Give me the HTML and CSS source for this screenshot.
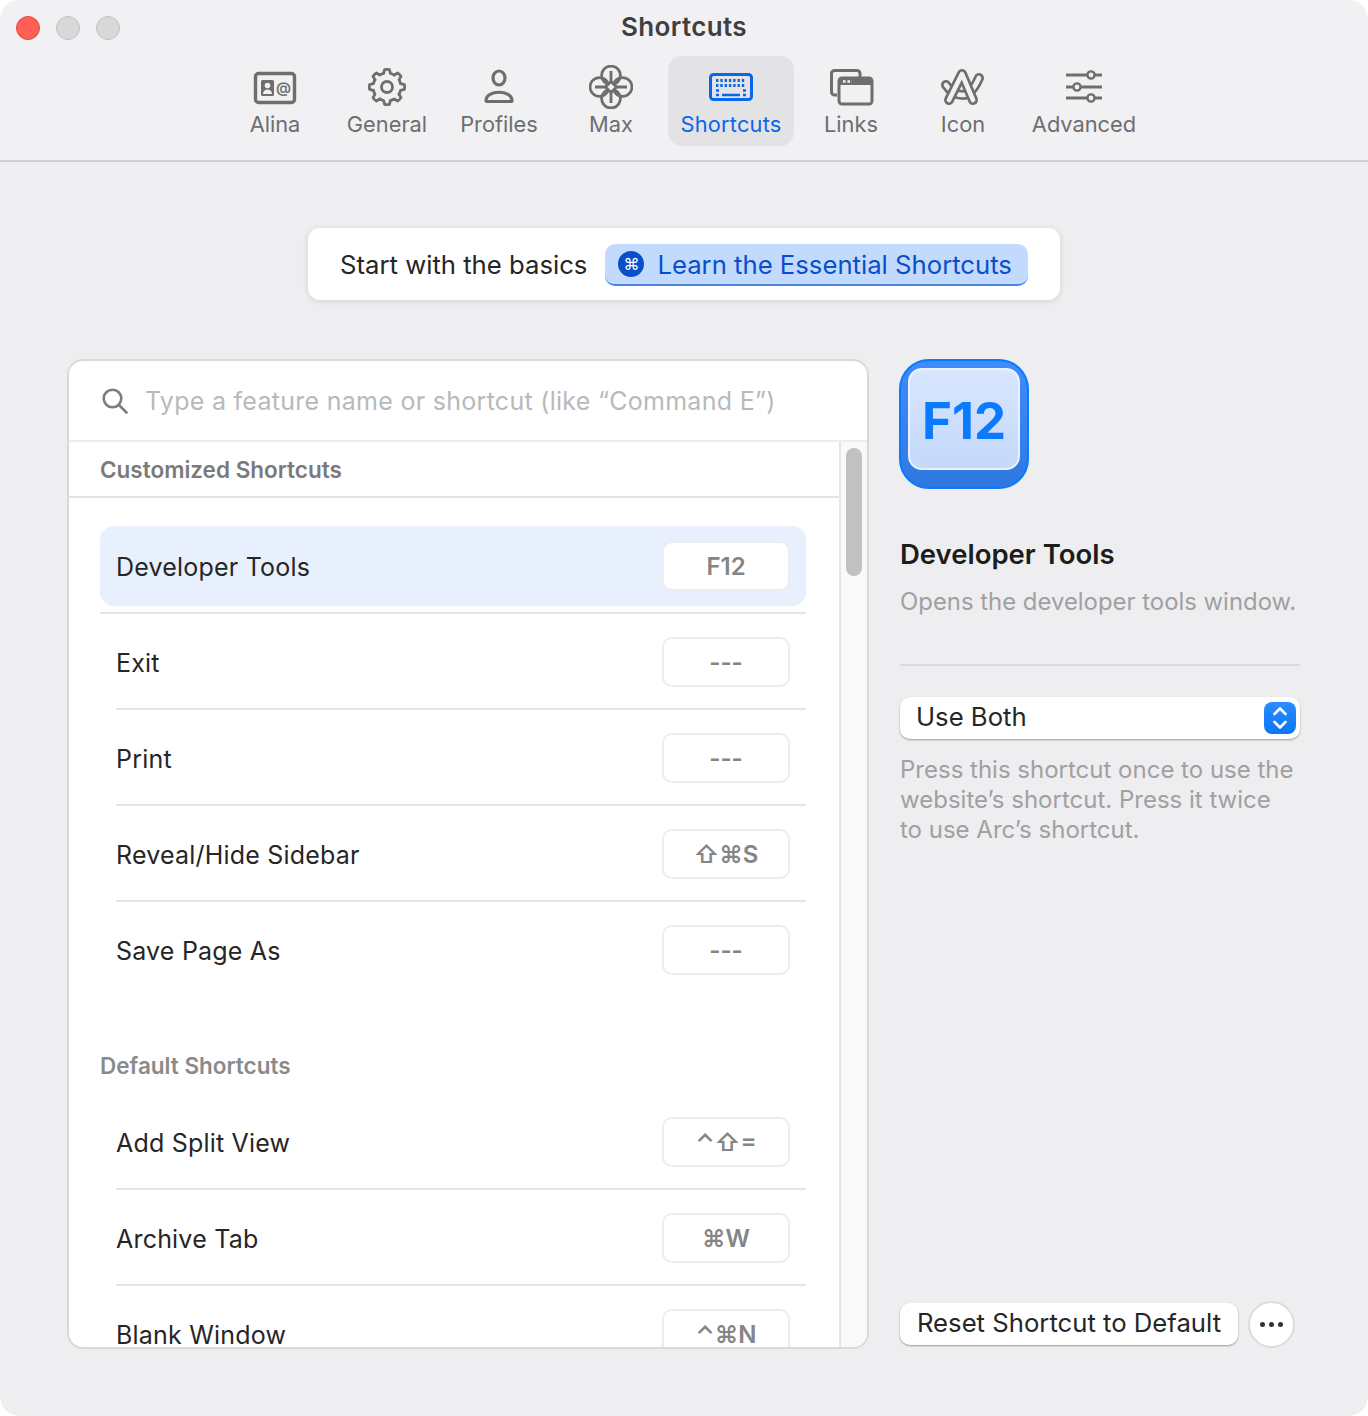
FILE: index.html
```html
<!DOCTYPE html>
<html lang="en">
<head>
  <meta charset="UTF-8" />
  <title>Shortcuts</title>
  <link rel="stylesheet" href="styles.css">
</head>
<body>
  <div class="window">
    <header class="toolbar">
      <div class="lights">
        <span class="light red"></span>
        <span class="light"></span>
        <span class="light"></span>
      </div>
      <div class="title">Shortcuts</div>
      <nav class="tabs">
        <div class="tab">
          <svg width="44" height="36" viewBox="0 0 44 36">
            <rect x="2.5" y="4.5" width="39" height="29" rx="3" fill="none" stroke="currentColor" stroke-width="3.4"/>
            <rect x="8" y="11" width="13" height="16" rx="1.5" fill="currentColor"/>
            <circle cx="14.5" cy="16.5" r="2.8" fill="#f1f1f4"/>
            <path d="M10 25c0-6 9-6 9 0z" fill="#f1f1f4"/>
            <text x="23" y="24" class="at">@</text>
          </svg>
          <span>Alina</span>
        </div>
        <div class="tab">
          <svg width="40" height="40" viewBox="0 0 40 40">
            <defs>
              <path id="tooth" d="M16.6 6.4 17.6 2.6Q20 2 22.4 2.6L23.4 6.4A14 14 0 0 1 27.2 8"/>
            </defs>
            <g fill="none" stroke="currentColor" stroke-width="2.8" stroke-linejoin="round" stroke-linecap="round">
              <use href="#tooth"/>
              <use href="#tooth" transform="rotate(45 20 20)"/>
              <use href="#tooth" transform="rotate(90 20 20)"/>
              <use href="#tooth" transform="rotate(135 20 20)"/>
              <use href="#tooth" transform="rotate(180 20 20)"/>
              <use href="#tooth" transform="rotate(225 20 20)"/>
              <use href="#tooth" transform="rotate(270 20 20)"/>
              <use href="#tooth" transform="rotate(315 20 20)"/>
              <circle cx="20" cy="20" r="5.5"/>
            </g>
          </svg>
          <span>General</span>
        </div>
        <div class="tab">
          <svg width="40" height="40" viewBox="0 0 40 40" fill="none" stroke="currentColor" stroke-width="3.2">
            <ellipse cx="20" cy="11" rx="6" ry="7"/>
            <path d="M7 33.5c0-11 26-11 26 0 0 .6-.4 1-1 1H8c-.6 0-1-.4-1-1z" stroke-linejoin="round"/>
          </svg>
          <span>Profiles</span>
        </div>
        <div class="tab">
          <svg width="44" height="44" viewBox="0 0 44 44" fill="none" stroke="currentColor" stroke-width="2.8" stroke-linejoin="round">
            <path d="M22 16.5 27.5 22 22 27.5 16.5 22z"/>
            <path d="M19.25 19.25A9.3 9.3 0 1 1 24.75 19.25"/>
            <path d="M19.25 24.75A9.3 9.3 0 1 0 24.75 24.75"/>
            <path d="M19.25 19.25A9.3 9.3 0 1 0 19.25 24.75"/>
            <path d="M24.75 19.25A9.3 9.3 0 1 1 24.75 24.75"/>
            <path d="M22 6V16.5M22 27.5V38M6 22H16.5M27.5 22H38"/>
          </svg>
          <span>Max</span>
        </div>
        <div class="tab active">
          <svg width="46" height="32" viewBox="0 0 46 32">
            <rect x="2.5" y="3.5" width="41" height="25" rx="3" fill="none" stroke="currentColor" stroke-width="3"/>
            <path d="M8 9.5H38M8 14.5H38" stroke="currentColor" stroke-width="3" stroke-dasharray="2.4 1.9" fill="none"/>
            <path d="M8 19.5H11M35 19.5H38M8 24H11M14 24H32M35 24H38" stroke="currentColor" stroke-width="2.4" fill="none"/>
          </svg>
          <span>Shortcuts</span>
        </div>
        <div class="tab">
          <svg width="46" height="40" viewBox="0 0 46 40" fill="none" stroke="currentColor" stroke-width="3">
            <path d="M9 28H6.5a3 3 0 0 1-3-3V6.5a3 3 0 0 1 3-3H29a3 3 0 0 1 3 3V10"/>
            <rect x="11" y="11" width="33" height="26" rx="3"/>
            <path d="M11 12.5a2 2 0 0 1 2-2h29a2 2 0 0 1 2 2V18H11z" fill="currentColor" stroke="none"/>
            <path d="M15 14.5H24" stroke="#f1f1f4" stroke-dasharray="2.6 1.8" stroke-width="2.4"/>
          </svg>
          <span>Links</span>
        </div>
        <div class="tab">
          <svg width="46" height="40" viewBox="0 0 46 40" fill="none" stroke-linecap="round" stroke-linejoin="round">
            <path d="M6 18C10 24 16 28 23 28 30 28 35 20 39 11" stroke="currentColor" stroke-width="10"/>
            <path d="M6 18C10 24 16 28 23 28 30 28 35 20 39 11" stroke="#f1f1f4" stroke-width="4.6"/>
            <path d="M9 33 22 7 33 33" stroke="currentColor" stroke-width="10"/>
            <path d="M9 33 22 7 33 33" stroke="#f1f1f4" stroke-width="4.6"/>
          </svg>
          <span>Icon</span>
        </div>
        <div class="tab wide">
          <svg width="40" height="36" viewBox="0 0 40 36" fill="none" stroke="currentColor" stroke-width="2.8">
            <path d="M2 6H23M31 6H38M2 18H9M17 18H38M2 29H23M31 29H38"/>
            <circle cx="27" cy="6" r="3.6" stroke-width="2.4"/>
            <circle cx="13" cy="18" r="3.6" stroke-width="2.4"/>
            <circle cx="27" cy="29" r="3.6" stroke-width="2.4"/>
          </svg>
          <span>Advanced</span>
        </div>
      </nav>
    </header>

    <div class="banner-wrap">
      <div class="banner">
        <span class="banner-text">Start with the basics</span>
        <button class="learn"><span class="cmd-dot">⌘</span>Learn the Essential Shortcuts</button>
      </div>
    </div>

    <main class="main">
      <section class="panel">
        <div class="search">
          <svg width="26" height="26" viewBox="0 0 26 26" fill="none" stroke="#7d7d7d" stroke-width="2.6" stroke-linecap="round">
            <circle cx="10.5" cy="10.5" r="8.8"/>
            <path d="M17 17 24.5 24.5"/>
          </svg>
          <span>Type a feature name or shortcut (like “Command E”)</span>
        </div>
        <div class="panel-body">
          <div class="list">
            <div class="list-head">Customized Shortcuts</div>
            <div class="rows">
              <div class="row selected"><span>Developer Tools</span><span class="key">F12</span></div>
              <div class="row"><span>Exit</span><span class="key">---</span></div>
              <div class="row"><span>Print</span><span class="key">---</span></div>
              <div class="row"><span>Reveal/Hide Sidebar</span><span class="key">⇧⌘S</span></div>
              <div class="row last"><span>Save Page As</span><span class="key">---</span></div>
              <div class="group">Default Shortcuts</div>
              <div class="row"><span>Add Split View</span><span class="key">⌃⇧=</span></div>
              <div class="row"><span>Archive Tab</span><span class="key">⌘W</span></div>
              <div class="row"><span>Blank Window</span><span class="key">⌃⌘N</span></div>
            </div>
          </div>
          <div class="scroll"><div class="thumb"></div></div>
        </div>
      </section>

      <aside class="detail">
        <div class="keycap"><div class="keyface">F12</div></div>
        <h2>Developer Tools</h2>
        <p class="desc">Opens the developer tools window.</p>
        <hr class="rule">
        <div class="select">
          <span>Use Both</span>
          <span class="stepper">
            <svg width="18" height="26" viewBox="0 0 18 26" fill="none" stroke="#fff" stroke-width="2.6" stroke-linecap="round" stroke-linejoin="round">
              <path d="M3.5 9 9 3.5 14.5 9M3.5 17 9 22.5 14.5 17"/>
            </svg>
          </span>
        </div>
        <p class="help">Press this shortcut once to use the website’s shortcut. Press it twice to use Arc’s shortcut.</p>
        <div class="actions">
          <button class="reset">Reset Shortcut to Default</button>
          <button class="more"><i></i><i></i><i></i></button>
        </div>
      </aside>
    </main>
  </div>
</body>
</html>
```
FILE: styles.css
```css
html, body {
  margin: 0;
  background: #fff;
}
body {
  font-family: Inter, "Noto Sans", "DejaVu Sans", sans-serif;
  font-size: 25px;
  color: #262626;
}
.window {
  width: 1368px;
  height: 1416px;
  background: #eeeef0;
  border-radius: 20px;
  overflow: hidden;
  display: flex;
  flex-direction: column;
}

/* toolbar */
.toolbar {
  position: relative;
  height: 160px;
  background: #f1f1f4;
  border-bottom: 2px solid #cfcfd1;
  flex: none;
}
.lights {
  position: absolute;
  left: 16px;
  top: 16px;
  display: flex;
  gap: 16px;
}
.light {
  width: 24px;
  height: 24px;
  border-radius: 50%;
  background: #d8d8da;
  box-sizing: border-box;
  border: 1px solid #bfbfc1;
}
.light.red {
  background: #ff5f57;
  border-color: #e5483f;
}
.title {
  text-align: center;
  font-weight: 600;
  font-size: 26px;
  letter-spacing: 0.35px;
  line-height: 30px;
  padding-top: 12px;
  color: #3f3f3f;
}
.tabs {
  display: flex;
  margin-top: 14px;
  padding-left: 219px;
}
.tab {
  width: 112px;
  height: 90px;
  display: flex;
  flex-direction: column;
  align-items: center;
  color: #6e6e6e;
  font-size: 21.8px;
  position: relative;
  border-radius: 14px;
}
.tab svg {
  position: absolute;
  top: 31px;
  left: 50%;
  transform: translate(-50%, -50%);
}
.tab span {
  margin-top: 54px;
  line-height: 28px;
  white-space: nowrap;
}
.tab.active {
  width: 126px;
  margin: 0 1px;
  background: #e3e3e6;
  color: #0a66ea;
  letter-spacing: 0.2px;
}
.tab.wide {
  width: 130px;
}
.at {
  font-size: 15px;
  font-weight: 600;
  fill: currentColor;
}

/* banner */
.banner-wrap {
  display: flex;
  justify-content: center;
  padding-top: 66px;
  flex: none;
}
.banner {
  width: 752px;
  height: 72px;
  box-sizing: border-box;
  background: #fff;
  border-radius: 12px;
  box-shadow: 0 1px 6px rgba(0, 0, 0, 0.12);
  display: flex;
  align-items: center;
  padding: 2px 0 0 32px;
  gap: 18px;
  font-size: 25.7px;
}
.banner-text {
  padding-bottom: 2px;
}
.learn {
  font: inherit;
  color: #0a4fc7;
  background: #c3daff;
  border: 0;
  border-bottom: 2px solid #4a86e0;
  border-radius: 10px;
  height: 42px;
  width: 423px;
  padding: 0 0 0 13px;
  display: flex;
  align-items: center;
  gap: 13px;
}
.cmd-dot {
  width: 26px;
  height: 26px;
  border-radius: 50%;
  background: #0a4fc7;
  color: #fff;
  font-family: "DejaVu Sans", sans-serif;
  font-size: 16px;
  display: flex;
  align-items: center;
  justify-content: center;
}

/* main area */
.main {
  flex: 1;
  display: flex;
  gap: 32px;
  padding: 60px 68px 68px;
  min-height: 0;
}
.panel {
  width: 802px;
  margin: -1px;
  box-sizing: border-box;
  background: #fff;
  border: 2px solid #d9d9db;
  border-radius: 16px;
  display: flex;
  flex-direction: column;
  overflow: hidden;
}
.search {
  height: 79px;
  flex: none;
  display: flex;
  align-items: center;
  gap: 17px;
  padding-left: 33px;
  color: #b9b9b9;
  letter-spacing: 0.28px;
  border-bottom: 2px solid #ededee;
}
.panel-body {
  flex: 1;
  min-height: 0;
  display: flex;
}
.list {
  flex: 1;
  min-width: 0;
  overflow: hidden;
}
.list-head {
  height: 54px;
  line-height: 56px;
  padding-left: 31px;
  font-size: 22.5px;
  font-weight: 600;
  color: #7a7a7a;
  border-bottom: 2px solid #e3e3e4;
}
.rows {
  padding: 20px 33px 0 31px;
}
.row {
  height: 94px;
  margin-left: 16px;
  border-bottom: 2px solid #e5e5e6;
  display: flex;
  align-items: center;
  justify-content: space-between;
  padding-right: 16px;
}
.row > span:first-child {
  padding-top: 4px;
  letter-spacing: 0.2px;
}
.row.selected {
  position: relative;
  margin-left: 0;
  padding-left: 16px;
}
.row.selected::before {
  content: "";
  position: absolute;
  left: 0;
  right: 0;
  top: 8px;
  bottom: 6px;
  background: #e8f0fd;
  border-radius: 14px;
}
.row.selected > span {
  position: relative;
}
.row.selected .key {
  background: #fff;
}
.row.last {
  border-bottom: 0;
}
.key {
  width: 128px;
  height: 50px;
  margin-top: 2px;
  box-sizing: border-box;
  border: 2px solid #ededee;
  border-radius: 10px;
  display: flex;
  align-items: center;
  justify-content: center;
  font-size: 24px;
  font-weight: 600;
  color: #858585;
  font-family: Inter, "DejaVu Sans", sans-serif;
}
.group {
  height: 98px;
  box-sizing: border-box;
  padding-top: 56px;
  line-height: 28px;
  font-size: 22.5px;
  font-weight: 600;
  color: #8a8a8a;
}
.scroll {
  width: 28px;
  flex: none;
  box-sizing: border-box;
  background: #f9f9fa;
  border-left: 2px solid #e5e5e6;
}
.thumb {
  width: 16px;
  height: 128px;
  margin: 6px 0 0 5px;
  border-radius: 8px;
  background: #c1c1c1;
}

/* right column */
.detail {
  width: 400px;
  display: flex;
  flex-direction: column;
}
.keycap {
  width: 130px;
  height: 130px;
  margin: -1px 0 0 -1px;
  box-sizing: border-box;
  border-radius: 30px;
  border: 2px solid #0a7aff;
  background: linear-gradient(#3f8dfa, #2f78e2);
  padding: 7px 7px 17px;
}
.keyface {
  height: 100%;
  box-sizing: border-box;
  border: 2px solid #eaf2ff;
  border-radius: 14px;
  background: linear-gradient(#d8e6ff, #c4d8fa);
  color: #0a7aff;
  font-size: 51px;
  font-weight: 700;
  padding-top: 3px;
  display: flex;
  align-items: center;
  justify-content: center;
}
h2 {
  margin: 48px 0 0;
  font-size: 27.5px;
  line-height: 34px;
  font-weight: 600;
  color: #1c1c1c;
}
.desc {
  margin: 16px 0 0;
  line-height: 30px;
  font-size: 23.9px;
  white-space: nowrap;
  color: #a0a0a2;
}
.rule {
  width: 100%;
  margin: 47px 0 0;
  border: 0;
  border-top: 2px solid #d9d9db;
}
.select {
  margin-top: 31px;
  height: 42px;
  flex: none;
  box-sizing: border-box;
  background: #fff;
  border-radius: 10px;
  box-shadow: 0 1px 2px rgba(0, 0, 0, 0.35);
  display: flex;
  align-items: center;
  justify-content: space-between;
  padding: 0 4px 0 16px;
  font-size: 25.7px;
}
.select > span:first-child {
  padding-bottom: 3px;
}
.stepper {
  width: 32px;
  height: 32px;
  border-radius: 8px;
  background: linear-gradient(#2b8cff, #0a76fa);
  display: flex;
  align-items: center;
  justify-content: center;
}
.help {
  margin: 16px 0 0;
  max-width: 396px;
  line-height: 30px;
  font-size: 24px;
  color: #a0a0a2;
}
.actions {
  margin-top: auto;
  display: flex;
  align-items: center;
  gap: 10px;
}
.reset {
  width: 338px;
  height: 42px;
  margin-bottom: 1px;
  border: 0;
  border-radius: 10px;
  background: #fff;
  box-shadow: 0 1px 2px rgba(0, 0, 0, 0.35);
  font: inherit;
  font-size: 25.7px;
  color: #262626;
  padding: 0 0 3px;
}
.more {
  width: 47px;
  height: 47px;
  box-sizing: border-box;
  border: 2px solid #dcdcde;
  border-radius: 50%;
  background: #fff;
  display: flex;
  align-items: center;
  justify-content: center;
  gap: 4px;
  padding: 0;
}
.more i {
  width: 5px;
  height: 5px;
  border-radius: 50%;
  background: #333;
}
```
